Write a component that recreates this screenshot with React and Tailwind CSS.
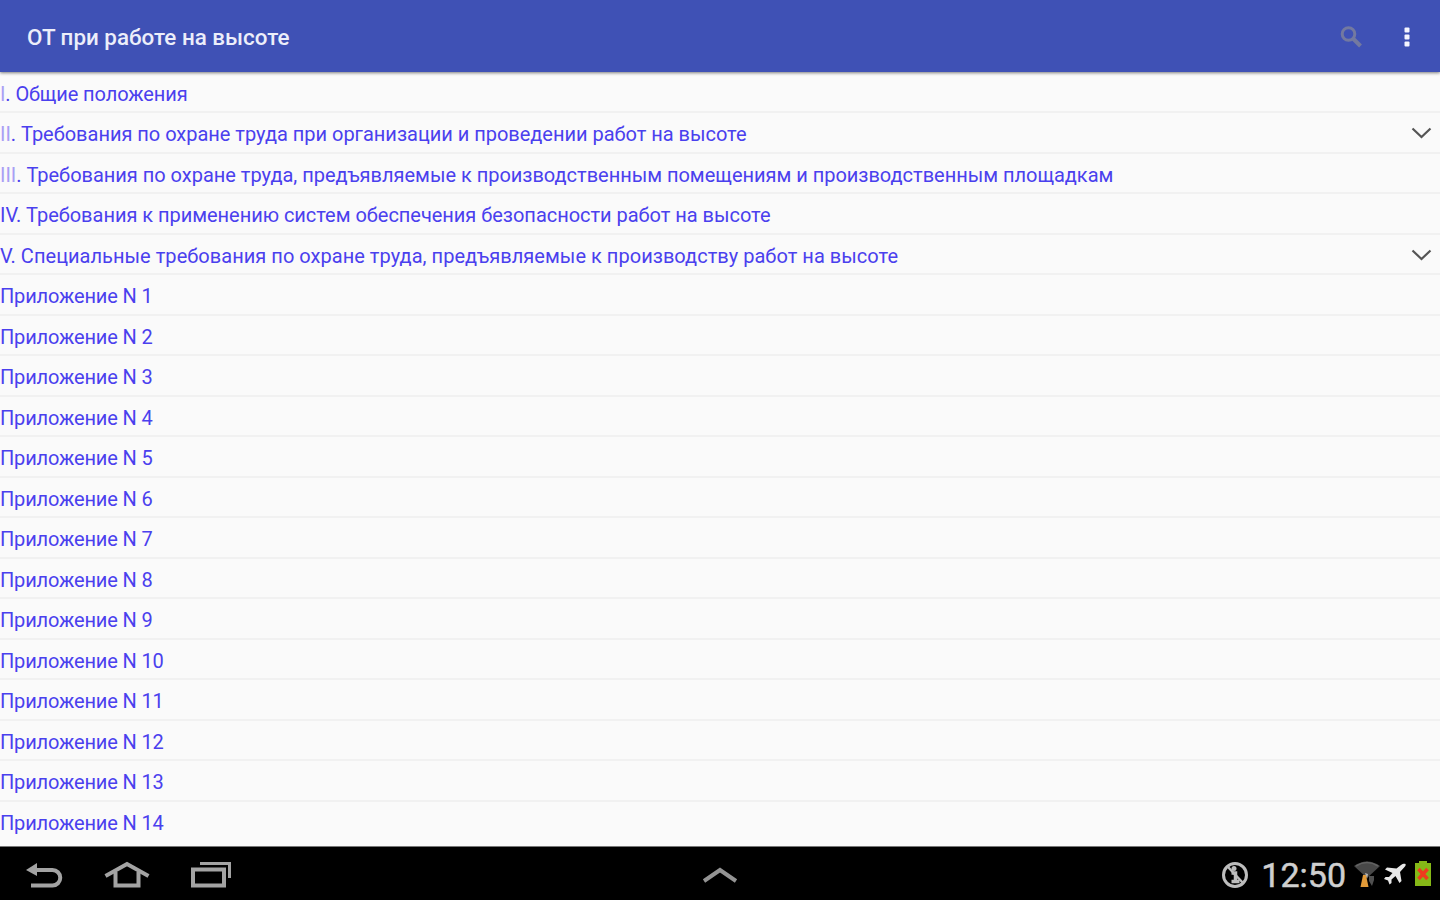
import React from 'react';

const sections = [
  { num: 'I', title: '. Общие положения', faded: true, tracking: 'tracking-[-0.1px]' },
  { num: 'II', title: '. Требования по охране труда при организации и проведении работ на высоте', faded: true, expandable: true, tracking: 'tracking-[-0.02px]' },
  { num: 'III', title: '. Требования по охране труда, предъявляемые к производственным помещениям и производственным площадкам', faded: true, tracking: 'tracking-[-0.02px]' },
  { num: 'IV', title: '. Требования к применению систем обеспечения безопасности работ на высоте', tracking: 'tracking-[-0.03px]' },
  { num: 'V', title: '. Специальные требования по охране труда, предъявляемые к производству работ на высоте', expandable: true, tracking: 'tracking-[0.03px]' },
];

const appendices = Array.from({ length: 14 }, (_, i) => ({
  num: '',
  title: `Приложение N ${i + 1}`,
  tracking: 'tracking-[-0.15px]',
}));

function Header() {
  return (
    <header className="relative z-10 flex h-[72px] shrink-0 items-center bg-[#3f51b5] pl-[27px] shadow-[0_1px_3px_rgba(0,0,0,0.5)]">
      <h1 className="flex-1 pt-[2px] text-[22.4px] leading-none font-medium text-[#eceefa]">ОТ при работе на высоте</h1>
      <svg className="mt-[2px] mr-[40px] h-6 w-6" viewBox="0 0 24 24" fill="none" stroke="#7379a0">
        <circle cx="9.5" cy="9" r="6.3" strokeWidth="3" />
        <path d="M14 13.5l7.5 7.5" strokeWidth="4" />
      </svg>
      <svg className="mt-[2px] mr-[29.5px] h-6 w-2" viewBox="0 0 8 24" fill="#f4f5ff">
        <rect x="1.5" y="2.5" width="5" height="5" rx="1" />
        <rect x="1.5" y="9.5" width="5" height="5" rx="1" />
        <rect x="1.5" y="16.5" width="5" height="5" rx="1" />
      </svg>
    </header>
  );
}

function Row({ item }) {
  return (
    <li className="flex h-[40.5px] items-center border-b-2 border-[#f1f1f1] last:border-transparent">
      <span className={`flex-1 pt-[3.5px] text-[20px] leading-none whitespace-nowrap text-[#4a40ee] ${item.tracking}`}>
        <span className={item.faded ? 'text-[#a99ff5]' : ''}>{item.num}</span>
        {item.title}
      </span>
      {item.expandable && (
        <svg className="mt-[2px] mr-2 h-3 w-[21px]" viewBox="0 0 21 12" fill="none" stroke="#555" strokeWidth="2.2">
          <path d="M1.5 1.5l9 8.5 9-8.5" />
        </svg>
      )}
    </li>
  );
}

function NavBar() {
  return (
    <footer className="grid h-[54px] shrink-0 grid-cols-3 items-center border-t border-[#777] bg-black">
      <div className="flex items-center pl-[25px]">
        <svg className="mt-[2px] h-[30px] w-[40px]" viewBox="0 0 40 30" fill="none" stroke="#a3a3a3" strokeWidth="4">
          <path d="M9 10h18.500a7.750 7.750 0 0 1 0 15.500H6" />
          <path d="M1 10L12 3v13z" fill="#a3a3a3" stroke="none" />
        </svg>
        <svg className="mt-[2px] ml-[38px] h-[30px] w-[48px]" viewBox="0 0 48 30" fill="none" stroke="#a3a3a3" strokeWidth="4">
          <path d="M2.500 16L24 4l21.500 12" />
          <path d="M12.500 12v13.500h23V12" />
        </svg>
        <svg className="mt-[2px] ml-[39px] h-[30px] w-[42px]" viewBox="0 0 42 30" fill="none" stroke="#a3a3a3">
          <rect x="3" y="9.500" width="31" height="16" strokeWidth="4" />
          <path d="M10 3.500h29.500V18" strokeWidth="3" />
        </svg>
      </div>
      <svg className="mt-[2px] h-4 w-9 justify-self-center" viewBox="0 0 36 16" fill="none" stroke="#949494" strokeWidth="4">
        <path d="M2 14L18 3l16 11" />
      </svg>
      <div className="flex items-center justify-end">
        <svg className="mt-[2px] h-7 w-7" viewBox="0 0 28 28" fill="none" stroke="#bdbdbd">
          <circle cx="14" cy="14" r="11.500" strokeWidth="3" />
          <path d="M7 6l15 16" strokeWidth="2.500" />
          <circle cx="13" cy="7.500" r="2.500" fill="#bdbdbd" stroke="none" />
          <path d="M10.500 12h4v8.500M10.500 20.500h8" strokeWidth="3.500" />
        </svg>
        <span className="mt-[3px] ml-3 text-[34px] leading-none text-[#cfcfcf] [-webkit-text-stroke:0.5px_#cfcfcf]">12:50</span>
        <svg className="ml-2 h-7 w-[26px]" viewBox="0 0 26 28">
          <path d="M0 6Q13-3 26 6L13 18z" fill="#484848" />
          <path d="M2 6Q13-1 24 6" fill="none" stroke="#626262" strokeWidth="1.500" />
          <path d="M11 13l3 1-1 5z" fill="#b5b5b5" />
          <path d="M9 15h3l2.500 12h-8z" fill="#e29a38" />
          <path d="M15 16h5v4l-2 6-3-5z" fill="#505050" />
        </svg>
        <svg className="mt-px ml-1 h-6 w-[22px]" viewBox="0 0 22 24" fill="#e8e8e8">
          <path d="M21.500 2c.5 1 0 2-1 3L16 10l1.500 9-2 2-4-7-4 3.500v3.500L5.500 22.500 4 18.500 0 17l1.500-2h3.500l3.500-4L1 7.500 3 5.500l9.500 1 4.500-3.500c1.500-1.200 3.500-1.800 4.500-1z" />
        </svg>
        <svg className="mr-[9px] ml-[9px] h-[25px] w-4" viewBox="0 0 16 25">
          <path d="M4 0h8v2h4v23H0V2h4z" fill="#85b817" />
          <path d="M3.500 8l9 10M12.500 8l-9 10" stroke="#ef3b1e" strokeWidth="3.500" />
        </svg>
      </div>
    </footer>
  );
}

export default function App() {
  return (
    <div className="flex h-screen w-full flex-col overflow-hidden bg-[#fafafa] font-['Roboto',sans-serif]">
      <Header />
      <ul className="flex-1 overflow-hidden pt-[0.5px]">
        {[...sections, ...appendices].map((item) => (
          <Row key={item.num + item.title} item={item} />
        ))}
      </ul>
      <NavBar />
    </div>
  );
}
